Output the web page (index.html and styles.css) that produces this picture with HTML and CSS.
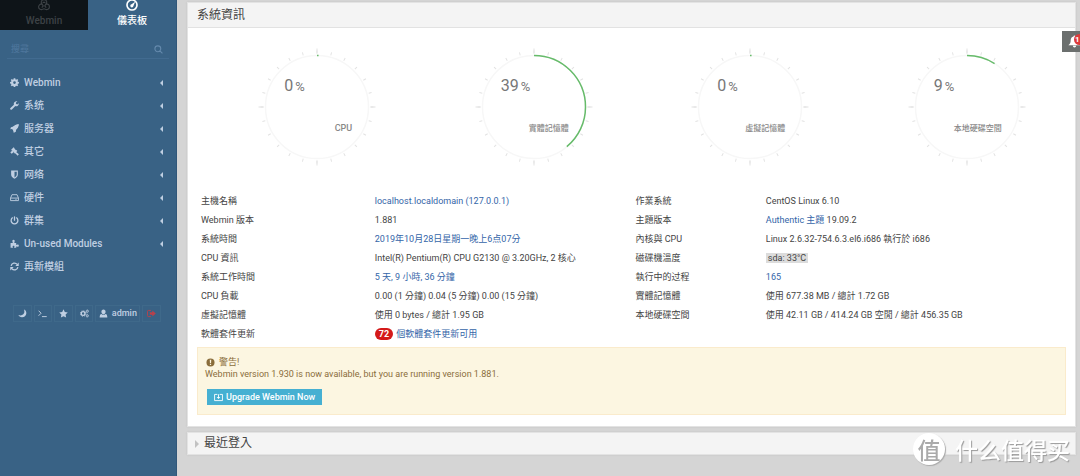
FILE: index.html
```
<!DOCTYPE html>
<html lang="zh-Hant">
<head>
<meta charset="utf-8">
<meta name="viewport" content="width=device-width, initial-scale=1">
<title>Webmin</title>
<link rel="stylesheet" href="styles.css">
</head>
<body>
<svg class="sprite" aria-hidden="true">
  <symbol id="cog" viewBox="0 0 16 16"><path fill-rule="evenodd" d="M6.600.5h2.800l.4 2 1.200.5L12.700 1.800l1.900 1.900L13.400 5.400l.5 1.200 2 .3v2.700l-2 .4-.5 1.200 1.200 1.700-1.900 1.900L11 13.600l-1.200.5-.4 1.900H6.600l-.4-1.900-1.200-.5-1.700 1.200-1.900-1.900 1.200-1.700-.5-1.200-2-.4V6.900l2-.3.5-1.200L1.400 3.700l1.900-1.900L5 3l1.200-.5zM8 5.800a2.400 2.400 0 1 0 0 4.800 2.400 2.400 0 0 0 0-4.800z"/></symbol>
  <symbol id="wrench" viewBox="0 0 16 16"><path d="M15.600 4.200 12.800 6 10.600 4.900V2.600L13.300 1A4.500 4.500 0 0 0 7 6.500L.8 12.400a1.700 1.700 0 0 0 2.600 2.500L9.500 9a4.500 4.500 0 0 0 6.100-4.800z"/></symbol>
  <symbol id="rocket" viewBox="0 0 16 16"><path d="M15.500.5C12 1 4 4.800.5 7.300L5 9l1.700 6.500C9.500 12 14.800 5 15.500.5zM6 8.800l5-4-3.600 5.400z"/><path d="M15.500.5C10.500.4 8 2.500 5.600 5.400L2.400 5.600.3 9.200l3.300-.3 3.500 3.500-.3 3.300 3.600-2.100.2-3.200c2.900-2.400 5-4.900 4.900-9.900z"/></symbol>
  <symbol id="gavel" viewBox="0 0 16 16"><path d="M6.500.6 8.200 2 7.700 2.800l3 3 .8-.5L13 6.900 8.500 11.400 7 9.900l.4-.9-3-3-.9.5L2 5zM10.300 8.300l5.500 4.600-2.200 2.600-5-5.500zM.5 9.500l4-3.300 2.500 2.700-4 3z"/></symbol>
  <symbol id="shield" viewBox="0 0 16 16"><path fill-rule="evenodd" d="M2 1h12v7c0 3.600-2.800 6-6 7.600C4.800 14 2 11.600 2 8zm6 2v10.200c2.300-1.300 4-3 4-5.200V3z"/></symbol>
  <symbol id="disk" viewBox="0 0 16 16"><path fill="none" stroke="currentColor" stroke-width="1.600" d="M1 9h14v4.500H1zM1 9l2.500-6h9L15 9M9 11.300h1m1.500 0h1"/></symbol>
  <symbol id="power" viewBox="0 0 16 16"><path fill="none" stroke="currentColor" stroke-width="2.300" stroke-linecap="round" d="M8 1.500V7.500M4.300 3.300a6 6 0 1 0 7.400 0"/></symbol>
  <symbol id="puzzle" viewBox="0 0 16 16"><path d="M1 7h3.500c.8 0 .4-1 .1-1.600C3.500 3 4.700 1.500 6.300 1.500S9 3 8 5.400C7.700 6 7.400 7 8.200 7H11v3c0 .8.9.5 1.600.2 1.600-.8 3.100.1 3.100 1.700s-1.500 2.400-3.100 1.600c-.7-.3-1.600-.5-1.600.4v1.600H7.700c-.8 0-.4-.9 0-1.400.6-1.300-.3-2.100-1.400-2.100s-2 .8-1.400 2.100c.3.500.7 1.400-.1 1.400H1z"/></symbol>
  <symbol id="refresh" viewBox="0 0 16 16"><path fill="none" stroke="currentColor" stroke-width="2.200" d="M2 7a6 6 0 0 1 10.700-2.700M14 9a6 6 0 0 1-10.700 2.700"/><path d="M15.500 1v6h-6zM.5 15V9h6z"/></symbol>
  <symbol id="moon" viewBox="0 0 16 16"><path d="M10.500.8c3 1.100 4.700 3.700 4.300 7.100-.5 4-3.900 7-8 6.700-2.800-.2-5-1.700-6-4 3.300 1.300 6.500.9 8.600-1.200 2.200-2.200 2.500-5.400 1.100-8.600z"/></symbol>
  <symbol id="terminal" viewBox="0 0 16 16"><path fill="none" stroke="currentColor" stroke-width="1.700" d="m1 3 4.500 4.500L1 12M7 13.500h8.500"/></symbol>
  <symbol id="star" viewBox="0 0 16 16"><path d="m8 .6 2.300 4.900 5.300.7-3.900 3.700 1 5.400L8 12.700l-4.700 2.600 1-5.400L.4 6.200l5.300-.7z"/></symbol>
  <symbol id="cogs" viewBox="0 0 16 16"><g fill="none" stroke="currentColor"><circle cx="5.500" cy="8" r="3.300" stroke-width="2.400"/><circle cx="5.500" cy="8" r="4.900" stroke-width="1.500" stroke-dasharray="2 1.850"/><circle cx="13" cy="4" r="1.700" stroke-width="1.400"/><circle cx="13" cy="4" r="2.600" stroke-width="1" stroke-dasharray="1.200 1"/><circle cx="13" cy="12" r="1.700" stroke-width="1.400"/><circle cx="13" cy="12" r="2.600" stroke-width="1" stroke-dasharray="1.200 1"/></g></symbol>
  <symbol id="user" viewBox="0 0 16 16"><path d="M8 1c2.300 0 3.700 1.700 3.700 4S10.300 9.300 8 9.300 4.300 7.300 4.300 5 5.700 1 8 1zM4.500 8.700C6 10.700 10 10.700 11.500 8.700c2.500.4 3.300 2.800 3.300 6.300H1.200c0-3.500.8-5.900 3.300-6.300z"/></symbol>
  <symbol id="logout" viewBox="0 0 16 16"><path fill="none" stroke="currentColor" stroke-width="1.700" d="M7 2.500H2.500Q1 2.500 1 4v8q0 1.500 1.500 1.500H7"/><path d="M5 5.700h4.500V2.500L15.700 8l-6.200 5.500v-3.200H5z"/></symbol>
  <symbol id="search" viewBox="0 0 16 16"><path fill="none" stroke="currentColor" stroke-width="2" d="M12 6.700a5.200 5.200 0 1 1-10.400 0 5.200 5.200 0 0 1 10.400 0zM10.500 10.500l4.500 4.500"/></symbol>
  <symbol id="webmin" viewBox="0 0 16 16"><path fill="none" stroke="currentColor" stroke-width="1.500" d="M5.200 6.500C3.500 4 4.500 1 8 1s4.500 3 2.800 5.500M5.200 6.500C2.500 6.500.8 8.500.8 10.500c0 2.700 3.200 4.500 5.700 3 .9-.5 2.100-.5 3 0 2.500 1.500 5.700-.3 5.700-3 0-2-1.700-4-4.400-4M5.200 6.500 7 9.300 5 11.500M10.800 6.500 9 9.300l2 2.200M6.200 4.500h3.600"/></symbol>
  <symbol id="dash" viewBox="0 0 16 16"><circle cx="8" cy="8" r="6.700" fill="none" stroke="currentColor" stroke-width="2.200"/><path d="M12.200 3.800 9.900 9.400a2.100 2.100 0 1 1-2.500-2.300z"/></symbol>
  <symbol id="bell" viewBox="0 0 16 16"><path d="M8 .5c.8 0 1.200.5 1.200 1.200C11.500 2.300 12.700 4 12.700 6.500c0 3 .8 4.800 2.800 6H.5c2-1.200 2.800-3 2.800-6 0-2.500 1.200-4.200 3.500-4.800C6.800 1 7.200.5 8 .5zM6 13.300h4a2 2 0 0 1-4 0z"/></symbol>
  <symbol id="warn" viewBox="0 0 16 16"><path fill-rule="evenodd" d="M8 .8a7.200 7.200 0 1 1 0 14.400A7.200 7.200 0 0 1 8 .8zM6.700 3.300 7 9h2l.3-5.700zM6.900 10.300v2.200h2.200v-2.200z"/></symbol>
  <symbol id="upgrade" viewBox="0 0 16 16"><path fill="none" stroke="currentColor" stroke-width="1.600" d="M6 2.500H1v11h14v-11h-5"/><path d="M7.200 2h1.600v5H11.200L8 10.500 4.800 7h2.400z"/></symbol>
</svg>

<div class="app">
  <aside class="sidebar">
    <nav class="tabs">
      <a class="tab tab-dark" href="#"><svg class="tab-icon"><use href="#webmin"/></svg><span>Webmin</span></a>
      <a class="tab" href="#"><svg class="tab-icon"><use href="#dash"/></svg><span>儀表板</span></a>
    </nav>
    <form class="search">
      <input class="search-input" type="text" placeholder="搜尋" aria-label="搜尋">
      <svg class="icon"><use href="#search"/></svg>
    </form>
    <nav class="menu">
      <a class="item" href="#"><svg class="icon"><use href="#cog"/></svg><span>Webmin</span><i class="caret"></i></a>
      <a class="item" href="#"><svg class="icon"><use href="#wrench"/></svg><span>系统</span><i class="caret"></i></a>
      <a class="item" href="#"><svg class="icon"><use href="#rocket"/></svg><span>服务器</span><i class="caret"></i></a>
      <a class="item" href="#"><svg class="icon"><use href="#gavel"/></svg><span>其它</span><i class="caret"></i></a>
      <a class="item" href="#"><svg class="icon"><use href="#shield"/></svg><span>网络</span><i class="caret"></i></a>
      <a class="item" href="#"><svg class="icon"><use href="#disk"/></svg><span>硬件</span><i class="caret"></i></a>
      <a class="item" href="#"><svg class="icon"><use href="#power"/></svg><span>群集</span><i class="caret"></i></a>
      <a class="item" href="#"><svg class="icon"><use href="#puzzle"/></svg><span>Un-used Modules</span><i class="caret"></i></a>
      <a class="item" href="#"><svg class="icon"><use href="#refresh"/></svg><span>再新模組</span></a>
    </nav>
    <div class="tools">
      <button class="tool" type="button" aria-label="夜間模式"><svg class="icon"><use href="#moon"/></svg></button>
      <button class="tool" type="button" aria-label="終端機"><svg class="icon"><use href="#terminal"/></svg></button>
      <button class="tool" type="button" aria-label="最愛"><svg class="icon"><use href="#star"/></svg></button>
      <button class="tool" type="button" aria-label="設定"><svg class="icon"><use href="#cogs"/></svg></button>
      <button class="tool tool-user" type="button"><svg class="icon"><use href="#user"/></svg><span>admin</span></button>
      <button class="tool tool-exit" type="button" aria-label="登出"><svg class="icon"><use href="#logout"/></svg></button>
    </div>
  </aside>

  <main class="main">
    <section class="panel">
      <h1 class="panel-title">系統資訊</h1>
      <div class="gauges">
        <figure class="gauge">
          <svg class="dial" viewBox="0 0 120 120"><circle class="ticks" cx="60" cy="60" r="55" pathLength="360"/><circle class="majors" cx="60" cy="60" r="56" pathLength="360"/><circle class="ring" cx="60" cy="60" r="51.500"/><circle class="arc" cx="60" cy="60" r="51.500" pathLength="100" stroke-dasharray="0.500 100"/></svg>
          <figcaption class="reading"><span class="value">0<small>%</small></span><span class="name">CPU</span></figcaption>
        </figure>
        <figure class="gauge">
          <svg class="dial" viewBox="0 0 120 120"><circle class="ticks" cx="60" cy="60" r="55" pathLength="360"/><circle class="majors" cx="60" cy="60" r="56" pathLength="360"/><circle class="ring" cx="60" cy="60" r="51.500"/><circle class="arc" cx="60" cy="60" r="51.500" pathLength="100" stroke-dasharray="39 100"/></svg>
          <figcaption class="reading"><span class="value">39<small>%</small></span><span class="name name-cjk">實體記憶體</span></figcaption>
        </figure>
        <figure class="gauge">
          <svg class="dial" viewBox="0 0 120 120"><circle class="ticks" cx="60" cy="60" r="55" pathLength="360"/><circle class="majors" cx="60" cy="60" r="56" pathLength="360"/><circle class="ring" cx="60" cy="60" r="51.500"/><circle class="arc" cx="60" cy="60" r="51.500" pathLength="100" stroke-dasharray="0.500 100"/></svg>
          <figcaption class="reading"><span class="value">0<small>%</small></span><span class="name name-cjk">虛擬記憶體</span></figcaption>
        </figure>
        <figure class="gauge">
          <svg class="dial" viewBox="0 0 120 120"><circle class="ticks" cx="60" cy="60" r="55" pathLength="360"/><circle class="majors" cx="60" cy="60" r="56" pathLength="360"/><circle class="ring" cx="60" cy="60" r="51.500"/><circle class="arc" cx="60" cy="60" r="51.500" pathLength="100" stroke-dasharray="9 100"/></svg>
          <figcaption class="reading"><span class="value">9<small>%</small></span><span class="name name-cjk">本地硬碟空間</span></figcaption>
        </figure>
      </div>
      <div class="panel-body">
        <table class="info">
          <colgroup><col class="c1"><col class="c2"><col class="c3"><col class="c4"></colgroup>
          <tr><th>主機名稱</th><td><a href="#">localhost.localdomain (127.0.0.1)</a></td><th>作業系統</th><td>CentOS Linux 6.10</td></tr>
          <tr><th>Webmin 版本</th><td>1.881</td><th>主題版本</th><td><a href="#">Authentic 主題</a> 19.09.2</td></tr>
          <tr><th>系統時間</th><td><a href="#">2019年10月28日星期一晚上6点07分</a></td><th>內核與 CPU</th><td>Linux 2.6.32-754.6.3.el6.i686 執行於 i686</td></tr>
          <tr><th>CPU 資訊</th><td>Intel(R) Pentium(R) CPU G2130 @ 3.20GHz, 2 核心</td><th>磁碟機溫度</th><td><span class="chip">sda: 33°C</span></td></tr>
          <tr><th>系統工作時間</th><td><a href="#">5 天, 9 小時, 36 分鐘</a></td><th>執行中的过程</th><td><a href="#">165</a></td></tr>
          <tr><th>CPU 負載</th><td>0.00 (1 分鐘) 0.04 (5 分鐘) 0.00 (15 分鐘)</td><th>實體記憶體</th><td>使用 677.38 MB / 總計 1.72 GB</td></tr>
          <tr><th>虛擬記憶體</th><td>使用 0 bytes / 總計 1.95 GB</td><th>本地硬碟空間</th><td>使用 42.11 GB / 414.24 GB 空閒 / 總計 456.35 GB</td></tr>
          <tr><th>軟體套件更新</th><td><a href="#"><span class="count">72</span>個軟體套件更新可用</a></td><td></td><td></td></tr>
        </table>
        <div class="alert" role="alert">
          <p class="alert-line alert-head"><svg class="icon"><use href="#warn"/></svg>警告!</p>
          <p class="alert-line">Webmin version 1.930 is now available, but you are running version 1.881.</p>
          <button class="upgrade" type="button"><svg class="icon"><use href="#upgrade"/></svg>Upgrade Webmin Now</button>
        </div>
      </div>
    </section>
    <section class="panel">
      <h2 class="panel-title panel-closed"><i class="expand"></i>最近登入</h2>
    </section>
  </main>
</div>

<button class="notice" type="button" aria-label="通知"><svg class="bell"><use href="#bell"/></svg><span class="notice-count">1</span></button>
<div class="mark"><span class="mark-logo">值</span><span>什么值得买</span></div>
</body>
</html>
```
FILE: styles.css
```
* { box-sizing: border-box; }

body {
  margin: 0;
  background: #d5d5d5;
  color: #444;
  font: 9px/19px Roboto, "Noto Sans CJK TC", "Noto Sans CJK SC", sans-serif;
  overflow: hidden;
}

a { color: #3465a8; text-decoration: none; }
button, input { font: inherit; color: inherit; }
.sprite { position: absolute; width: 0; height: 0; }
.icon { flex: none; width: 9px; height: 9px; fill: currentColor; }

.app { display: flex; min-height: 100vh; }

.sidebar {
  flex: none;
  width: 177px;
  background: #396285;
  border-right: 1px solid #31577a;
  color: #c0cfe2;
  font-size: 10px;
  font-weight: 500;
}
.tabs { display: flex; height: 30px; }
.tab {
  flex: 1;
  display: flex;
  flex-direction: column;
  align-items: center;
  justify-content: flex-end;
  gap: 3px;
  padding-bottom: 2px;
  overflow: hidden;
  color: #fff;
  line-height: 14px;
}
.tab-dark { background: #0e1418; color: #3d4246; }
.tab-icon { flex: none; width: 12px; height: 12px; fill: currentColor; }

.search {
  display: flex;
  align-items: center;
  margin: 10px 7px 0;
  padding: 0 6px 0 4px;
  border-bottom: 1px solid #426b90;
  color: #6489ac;
}
.search-input {
  flex: 1;
  min-width: 0;
  height: 18px;
  padding: 0;
  border: 0;
  outline: 0;
  background: none;
  font-size: 9px;
}
.search-input::placeholder { color: #4d759b; }

.menu { display: flex; flex-direction: column; margin-top: 12px; }
.item {
  display: flex;
  align-items: center;
  gap: 5px;
  padding: 0 13px 0 10px;
  color: inherit;
  line-height: 23px;
}
.caret {
  margin-left: auto;
  border: solid transparent;
  border-width: 3px 3px 3px 0;
  border-right-color: #c0cfe2;
}

.tools { display: flex; gap: 2px; margin: 27px 15px 0 13px; }
.tool {
  flex: 1 0 0;
  display: flex;
  align-items: center;
  justify-content: center;
  gap: 4px;
  height: 17px;
  padding: 0;
  border: 1px solid #3f698a;
  background: none;
  font-size: 9px;
}
.tool-user { flex: none; width: 45px; }
.tool-exit { color: #b8414b; }

.main {
  flex: 1;
  display: flex;
  flex-direction: column;
  gap: 5px;
  min-width: 0;
  padding: 2px 4px 0 10px;
}
.panel {
  background: #fff;
  border: 1px solid #e3e3e3;
  box-shadow: 0 0 2px #c4c4c4;
}
.panel-title {
  margin: 0;
  padding: 1px 9px 0;
  border-bottom: 1px solid #e2e2e2;
  background: #f4f4f4;
  font-size: 12px;
  font-weight: 400;
  line-height: 23px;
}
.panel-closed {
  display: flex;
  align-items: center;
  gap: 5px;
  padding: 0 7px;
  border: 0;
  line-height: 21px;
}
.expand {
  border: solid transparent;
  border-width: 4px 0 4px 4px;
  border-left-color: #c2c2c2;
}
.panel-body { padding: 25px 9px 11px; }

.gauges {
  display: grid;
  grid-template-columns: repeat(4, 1fr);
  justify-items: center;
  padding: 19px 0 0 21px;
}
.gauge { display: grid; width: 120px; margin: 0; }
.dial, .reading { grid-area: 1 / 1; }
.dial { width: 120px; height: 120px; transform: rotate(-90deg); fill: none; }
.ticks { stroke: #e2e2e2; stroke-width: 3; stroke-dasharray: 1 14; stroke-dashoffset: 0.5; }
.majors { stroke: #e2e2e2; stroke-width: 5; stroke-dasharray: 1 89; stroke-dashoffset: 0.5; }
.ring { stroke: #f7f7f7; stroke-width: 1.500; }
.arc { stroke: #66bb6a; stroke-width: 1.500; }
.reading {
  display: flex;
  flex-direction: column;
  gap: 22px;
  padding: 29px 25px 0 27px;
  color: #777;
}
.value { font-size: 16px; line-height: 20px; }
.value small { margin-left: 2px; font-size: 13px; }
.name { align-self: flex-end; font-weight: 500; white-space: nowrap; color: #888; }
.name-cjk { font-size: 8px; }

.info { width: 100%; table-layout: fixed; border-collapse: collapse; }
.info th, .info td {
  height: 19px;
  padding: 0 0 0 4px;
  font-weight: 400;
  text-align: left;
  white-space: nowrap;
}
.c1 { width: 20%; }
.c2 { width: 30%; }
.c3 { width: 15%; }
.c4 { width: 35%; }
.chip { padding: 0 2px; background: #dcdcdc; }
.count {
  margin-right: 3px;
  padding: 1px 4px;
  border-radius: 6px;
  background: #d41a1a;
  color: #fff;
  font-weight: 700;
}

.alert {
  margin-top: 3px;
  padding: 8px 7px 9px;
  border: 1px solid #faebcc;
  background: #fcf6e1;
  color: #8a6d3b;
}
.alert-line { margin: 0; line-height: 12px; }
.alert-head { display: flex; align-items: center; gap: 4px; padding-left: 1px; }
.upgrade {
  display: flex;
  align-items: center;
  gap: 3px;
  height: 16px;
  margin: 9px 0 0 2px;
  padding: 0 7px;
  border: 0;
  background: #46b0d2;
  color: #fff;
  font-weight: 500;
}

.notice {
  position: fixed;
  top: 31px;
  right: 0;
  width: 18px;
  height: 21px;
  padding: 0 0 0 6px;
  border: 0;
  background: #6b6f6e;
  color: #fff;
  overflow: hidden;
}
.bell { display: block; width: 13px; height: 13px; fill: currentColor; }
.notice-count {
  position: absolute;
  top: 3px;
  left: 12px;
  width: 11px;
  height: 11px;
  padding-left: 1px;
  border-radius: 50%;
  background: #db3b3b;
  font-size: 8px;
  font-weight: 700;
  line-height: 11px;
  text-align: left;
}

.mark {
  position: fixed;
  right: 10px;
  bottom: 11px;
  display: flex;
  align-items: center;
  gap: 10px;
  color: #fff;
  font: 500 23px/32px "Noto Sans CJK SC", sans-serif;
  text-shadow: 1px 1px 1px #999;
  pointer-events: none;
}
.mark-logo {
  width: 32px;
  height: 32px;
  border-radius: 50%;
  background: #fff;
  box-shadow: 1px 1px 1px #aaa;
  color: #aaa;
  text-align: center;
  text-shadow: none;
}
```
